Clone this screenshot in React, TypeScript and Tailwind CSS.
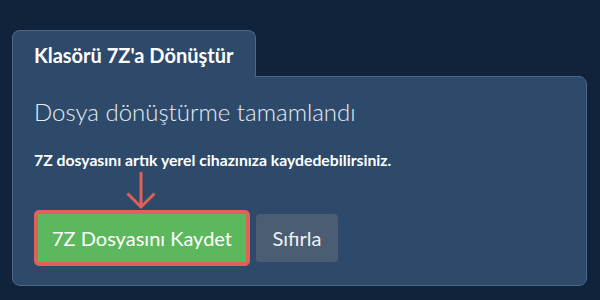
export default function App() {
  return (
    <div
      className="h-[300px] w-[600px] bg-[#11233a] pt-[30px] pl-3 pr-[13px]"
      style={{ fontFamily: 'Lato, "Noto Sans", sans-serif' }}
    >
      <div className="relative z-10 -mb-px h-[47px] w-[244px] rounded-t-lg border border-b-0 border-[#4d6887] bg-[#2d4a6b] px-[21px] pt-[12px]">
        <span className="block text-[20px] leading-[24px] font-bold text-white">Klasörü 7Z'a Dönüştür</span>
      </div>
      <div className="rounded-b-lg rounded-tr-lg border border-[#4d6887] bg-[#2d4a6b] pl-[21px] pt-[20px] pb-[19px]">
        <h1 className="text-[24px] leading-[29px] font-light text-[#e8edf2]">Dosya dönüştürme tamamlandı</h1>
        <p className="mt-[24px] text-[15.75px] leading-[19px] font-bold text-white">
          7Z dosyasını artık yerel cihazınıza kaydedebilirsiniz.
        </p>
        <div className="mt-[41px] flex items-center gap-[6px]">
          <div className="relative">
            <svg
              className="absolute left-[91px] top-[-40px]"
              width="32"
              height="40"
              viewBox="0 0 32 40"
              fill="none"
              stroke="#e0605a"
              strokeWidth={3}
            >
              <path d="M16 2V37" />
              <path d="M2.5 23.5L16 37L29.5 23.5" />
            </svg>
            <button className="h-[56px] w-[216px] rounded-[5px] border-4 border-[#e0605a] bg-[#5cb85c] text-[20px] leading-[24px] text-white">
              7Z Dosyasını Kaydet
            </button>
          </div>
          <button className="h-[48px] w-[82px] rounded-[4px] bg-[#4b5d72] text-[20px] leading-[24px] text-[#eef1f4]">
            Sıfırla
          </button>
        </div>
      </div>
    </div>
  );
}
